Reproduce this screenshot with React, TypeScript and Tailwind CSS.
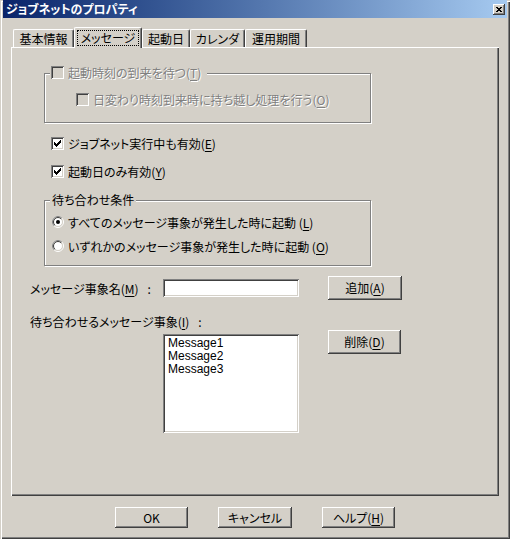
import React from "react";

const face = "bg-[#d4d0c8]";
const raised =
  "shadow-[inset_-1px_-1px_#404040,inset_1px_1px_#ffffff,inset_-2px_-2px_#808080,inset_2px_2px_#d4d0c8]";
const sunken =
  "shadow-[inset_1px_1px_#808080,inset_-1px_-1px_#ffffff,inset_2px_2px_#404040,inset_-2px_-2px_#d4d0c8]";
const etched = "border border-[#808080] shadow-[inset_1px_1px_#ffffff,1px_1px_#ffffff]";
const grayText = "text-[#808080] [text-shadow:1px_1px_0_#ffffff]";

function U({ children }: { children: React.ReactNode }) {
  return <span className="underline underline-offset-[2px]">{children}</span>;
}

function CheckMark() {
  return (
    <svg width="7" height="7" viewBox="0 0 7 7" shapeRendering="crispEdges">
      <path
        d="M6 0h1v3h-1zM5 1h1v3h-1zM4 2h1v3h-1zM3 3h1v3h-1zM2 4h1v3h-1zM1 3h1v3h-1zM0 2h1v3h-1z"
        fill="#000"
      />
    </svg>
  );
}

function Checkbox({ checked, disabled }: { checked?: boolean; disabled?: boolean }) {
  return (
    <div
      className={`w-[13px] h-[13px] shrink-0 flex items-center justify-center ${sunken} ${
        disabled ? "bg-[#d4d0c8]" : "bg-white"
      }`}
    >
      {checked && <CheckMark />}
    </div>
  );
}

function Radio({ checked }: { checked?: boolean }) {
  return (
    <svg width="12" height="12" viewBox="0 0 12 12" className="shrink-0">
      <circle cx="6" cy="6" r="5.5" fill="none" stroke="#ffffff" />
      <path d="M2.1 9.9 A5.5 5.5 0 0 1 9.9 2.1" fill="none" stroke="#808080" />
      <circle cx="6" cy="6" r="4.5" fill="#ffffff" stroke="#d4d0c8" />
      <path d="M2.8 9.2 A4.5 4.5 0 0 1 9.2 2.8" fill="none" stroke="#404040" />
      {checked && <circle cx="6" cy="6" r="2" fill="#000" />}
    </svg>
  );
}

function Button({ children, w }: { children: React.ReactNode; w: string }) {
  return (
    <div className={`${w} h-full flex items-center justify-center ${face} ${raised}`}>
      <span className="leading-[14px]">{children}</span>
    </div>
  );
}

function Tab({ label, w, active }: { label: string; w: string; active?: boolean }) {
  if (active) {
    return (
      <div
        className={`${w} relative z-10 h-[21px] -mb-[1px] ${face} border-l border-t border-white rounded-t-[2px] border-r border-r-[#404040] shadow-[inset_-1px_0_#808080] flex justify-center pt-[2px]`}
      >
        <span className="h-[16px] px-[3px] leading-[14px] border border-dotted border-black">{label}</span>
      </div>
    );
  }
  return (
    <div
      className={`${w} h-[18px] ${face} border-l border-t border-white rounded-t-[2px] border-r border-r-[#404040] shadow-[inset_-1px_0_#808080] flex items-center justify-center leading-[14px]`}
    >
      {label}
    </div>
  );
}

export default function App() {
  return (
    <div
      className={`w-[510px] h-[539px] ${face} text-[12px] text-black font-['Noto_Sans_CJK_JP','Liberation_Sans',sans-serif] [font-feature-settings:'palt'] shadow-[inset_1px_1px_#d4d0c8,inset_2px_2px_#ffffff,inset_-1px_-1px_#404040,inset_-2px_-2px_#808080] overflow-hidden`}
    >
      {/* title bar */}
      <div className="mx-[3px] h-[18px] flex items-center justify-between pl-[3px] pr-[2px] bg-linear-to-r from-[#0a246a] to-[#a6caf0]">
        <span className="text-white font-bold leading-[14px]">ジョブネットのプロパティ</span>
        <div className={`w-[12px] h-[11px] flex items-center justify-center ${face} ${raised}`}>
          <svg width="6" height="5" viewBox="0 0 6 5" shapeRendering="crispEdges">
            <path d="M0 0L6 5M6 0L0 5" stroke="#000" strokeWidth="1.2" />
          </svg>
        </div>
      </div>

      {/* tabs */}
      <div className="mt-[9px] h-[20px] pl-[13px] flex items-end">
        <Tab label="基本情報" w="w-[61px]" />
        <Tab label="メッセージ" w="w-[68px]" active />
        <Tab label="起動日" w="w-[48px]" />
        <Tab label="カレンダ" w="w-[55px]" />
        <Tab label="運用期間" w="w-[62px]" />
      </div>

      {/* panel */}
      <div className="ml-[11px] w-[488px] h-[449px] border-t border-l border-white shadow-[inset_-1px_-1px_#404040,inset_-2px_-2px_#808080]">
        {/* group: wait for start time (disabled) */}
        <div className={`relative mt-[25px] ml-[32px] w-[327px] h-[50px] ${etched}`}>
          <div className={`absolute left-[5px] -top-[8px] flex items-center gap-[4px] pl-[1px] pr-[6px] h-[13px] ${face}`}>
            <Checkbox disabled />
            <span className={`leading-[13px] ${grayText}`}>
              起動時刻の到来を待つ(<U>T</U>)
            </span>
          </div>
          <div className="pt-[19px] pl-[31px] flex items-center gap-[4px]">
            <Checkbox disabled />
            <span className={`leading-[13px] ${grayText}`}>
              日変わり時刻到来時に持ち越し処理を行う(<U>O</U>)
            </span>
          </div>
        </div>

        <div className="mt-[14px] ml-[39px] h-[13px] flex items-center gap-[4px]">
          <Checkbox checked />
          <span className="leading-[13px]">
            ジョブネット実行中も有効(<U>E</U>)
          </span>
        </div>
        <div className="mt-[15px] ml-[39px] h-[13px] flex items-center gap-[4px]">
          <Checkbox checked />
          <span className="leading-[13px]">
            起動日のみ有効(<U>Y</U>)
          </span>
        </div>

        {/* group: wait condition */}
        <div className={`relative mt-[22px] ml-[32px] w-[327px] h-[66px] ${etched}`}>
          <span className={`absolute left-[5px] -top-[8px] px-[2px] leading-[14px] ${face}`}>待ち合わせ条件</span>
          <div className="pt-[15px] pl-[7px] h-[12px] box-content flex items-center gap-[4px]">
            <Radio checked />
            <span className="leading-[13px]">
              すべてのメッセージ事象が発生した時に起動 (<U>L</U>)
            </span>
          </div>
          <div className="mt-[12px] pl-[7px] h-[12px] flex items-center gap-[4px]">
            <Radio />
            <span className="leading-[13px]">
              いずれかのメッセージ事象が発生した時に起動 (<U>O</U>)
            </span>
          </div>
        </div>

        {/* message name row */}
        <div className="mt-[10px] ml-[18px] h-[24px] flex items-center">
          <div className="w-[133px] leading-[14px] pt-[2px]">
            メッセージ事象名(<U>M</U>)<span className="ml-[9px]">:</span>
          </div>
          <div className={`w-[136px] h-[18px] bg-white ${sunken}`} />
          <div className="ml-[29px] h-[24px] flex">
            <Button w="w-[74px]">
              追加(<U>A</U>)
            </Button>
          </div>
        </div>

        <div className="mt-[15px] ml-[18px] leading-[14px]">
          待ち合わせるメッセージ事象(<U>I</U>)<span className="ml-[9px]">:</span>
        </div>

        <div className="mt-[1px] ml-[151px] flex items-start">
          <div
            className={`mt-[4px] w-[136px] h-[99px] bg-white ${sunken} pt-[3px] pl-[5px] font-['Liberation_Sans',sans-serif] text-[12px] leading-[13px]`}
          >
            <div>Message1</div>
            <div>Message2</div>
            <div>Message3</div>
          </div>
          <div className="ml-[29px] h-[24px] flex">
            <Button w="w-[73px]">
              削除(<U>D</U>)
            </Button>
          </div>
        </div>
      </div>

      {/* dialog buttons */}
      <div className="mt-[11px] h-[21px] pl-[115px] flex gap-[30px]">
        <Button w="w-[73px]">OK</Button>
        <Button w="w-[74px]">キャンセル</Button>
        <Button w="w-[73px]">
          ヘルプ(<U>H</U>)
        </Button>
      </div>
    </div>
  );
}
